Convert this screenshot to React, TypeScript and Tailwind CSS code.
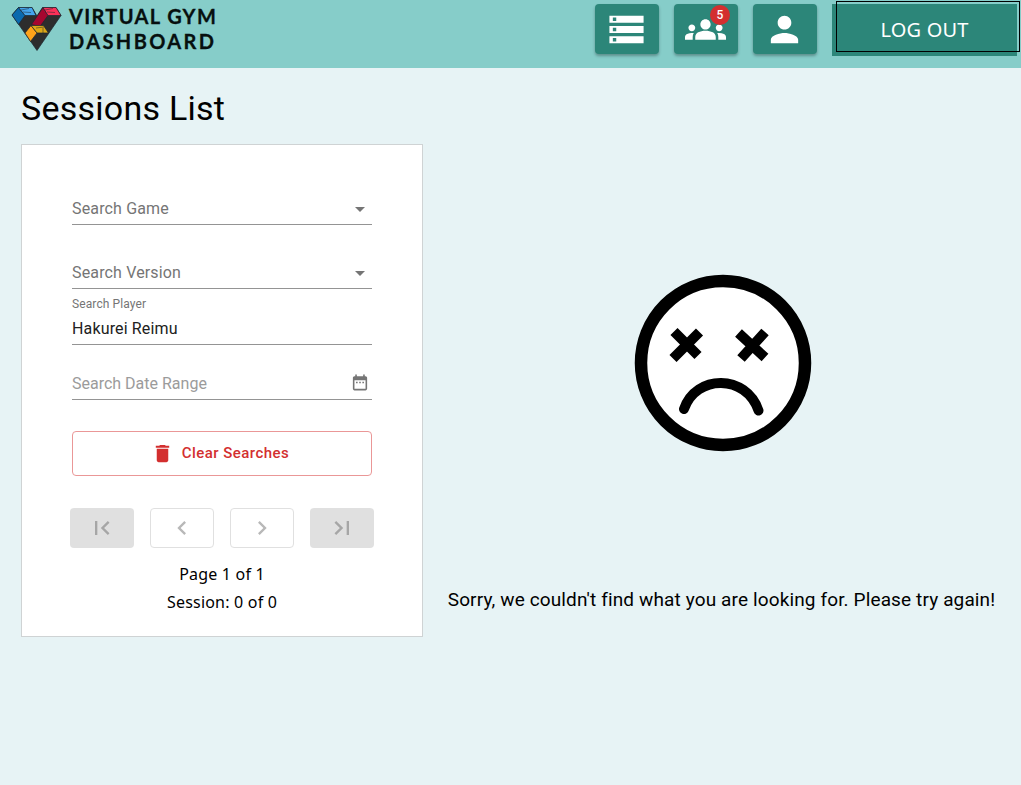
import React from 'react';

type IconProps = { d: string; className?: string };

function Icon({ d, className }: IconProps) {
  return (
    <svg viewBox="0 0 24 24" fill="currentColor" className={className} aria-hidden="true">
      <path d={d} />
    </svg>
  );
}

const icons = {
  storage: 'M2 20h20v-4H2v4zm2-3h2v2H4v-2zM2 4v4h20V4H2zm4 3H4V5h2v2zm-4 7h20v-4H2v4zm2-3h2v2H4v-2z',
  groups:
    'M12 12.75c1.63 0 3.07.39 4.24.9 1.08.48 1.76 1.56 1.76 2.73V18H6v-1.61c0-1.18.68-2.26 1.76-2.73 1.17-.52 2.61-.91 4.24-.91zM4 13c1.1 0 2-.9 2-2s-.9-2-2-2-2 .9-2 2 .9 2 2 2zm1.13 1.1c-.37-.06-.74-.1-1.13-.1-.99 0-1.93.21-2.78.58C.48 14.9 0 15.62 0 16.43V18h4.5v-1.61c0-.83.23-1.61.63-2.29zM20 13c1.1 0 2-.9 2-2s-.9-2-2-2-2 .9-2 2 .9 2 2 2zm4 3.43c0-.81-.48-1.53-1.22-1.85-.85-.37-1.79-.58-2.78-.58-.39 0-.76.04-1.13.1.4.68.63 1.46.63 2.29V18H24v-1.57zM12 6c1.66 0 3 1.34 3 3s-1.34 3-3 3-3-1.34-3-3 1.34-3 3-3z',
  person:
    'M12 12c2.21 0 4-1.79 4-4s-1.79-4-4-4-4 1.79-4 4 1.79 4 4 4zm0 2c-2.67 0-8 1.34-8 4v2h16v-2c0-2.66-5.33-4-8-4z',
  dropdown: 'M7 10l5 5 5-5z',
  calendar:
    'M9 11H7v2h2v-2zm4 0h-2v2h2v-2zm4 0h-2v2h2v-2zm2-7h-1V2h-2v2H8V2H6v2H5c-1.11 0-1.990.9-1.990 2L3 20c0 1.100.89 2 2 2h14c1.100 0 2-.9 2-2V6c0-1.100-.9-2-2-2zm0 16H5V9h14v11z',
  trash: 'M6 19c0 1.1.9 2 2 2h8c1.1 0 2-.9 2-2V7H6v12zM19 4h-3.5l-1-1h-5l-1 1H5v2h14V4z',
  first: 'M18.41 16.59L13.82 12l4.59-4.59L17 6l-6 6 6 6zM6 6h2v12H6z',
  previous: 'M15.41 7.41L14 6l-6 6 6 6 1.41-1.41L10.83 12z',
  next: 'M10 6L8.59 7.41 13.17 12l-4.58 4.59L10 18l6-6z',
  last: 'M5.59 7.41L10.18 12l-4.59 4.59L7 18l6-6-6-6zM16 6h2v12h-2z',
};

function Logo() {
  return (
    <div className="flex pl-[11px] pt-[6px]">
      <svg width="51" height="46" viewBox="0 0 51 46" aria-hidden="true">
        <g stroke="#1b2730" strokeWidth="0.7" strokeLinejoin="round">
          <path d="M1 9 7.5 1.5H21L26 10 31.500 1.500H45L50 9.500 26 44.500Z" fill="#2d2d2d" />
          <path d="M1 9 7.500 1.500 14 9.500 7.500 18.500Z" fill="#0a69ae" />
          <path d="M7.500 1.500H21L25 9.500H14Z" fill="#45a5ee" />
          <path d="M20.500 18.500 32 1.500 37 9.500 29 20.500Z" fill="#a5062f" />
          <path d="M32 1.500H45L50 9.500H37Z" fill="#fb3158" />
          <path d="M14 27 20 19.500 26 27 19.500 35.500Z" fill="#ffa31a" />
          <path d="M20 19.500H32.500L37.500 27H26Z" fill="#dda716" />
          <path d="m10 4 8-1.500M12 6l8 .5M34 4l8-1.500M36 6l8 .5M25 22l8-1M32 27V22" fill="none" strokeWidth="0.5" />
        </g>
      </svg>
      <div className="ml-[7px] -mt-[2px] font-[Lato] text-[20px] leading-[25px] font-bold text-[#07100f] [-webkit-text-stroke:0.3px_#07100f]">
        <div className="tracking-[1.35px] whitespace-nowrap">VIRTUAL GYM</div>
        <div className="tracking-[2.4px] whitespace-nowrap">DASHBOARD</div>
      </div>
    </div>
  );
}

function NavButton({ icon, badge }: { icon: string; badge?: number }) {
  return (
    <button className="relative flex h-[50px] w-16 items-center justify-center rounded bg-[#2c8679] text-white shadow-[0_2px_3px_rgba(0,0,0,0.3)]">
      <Icon d={icon} className="mr-px size-[41px]" />
      {badge !== undefined && (
        <span className="absolute top-px left-[36px] flex size-5 items-center justify-center rounded-full bg-[#d32f2f] text-[12px] font-medium">
          {badge}
        </span>
      )}
    </button>
  );
}

function SelectField({ label }: { label: string }) {
  return (
    <div className="flex h-8 items-center justify-between border-b border-[#949494] text-[#757575]">
      <span className="text-[16px] leading-[23px] tracking-[0.15px] text-[#757575]">{label}</span>
      <Icon d={icons.dropdown} className="size-6" />
    </div>
  );
}

function PageButton({ icon, filled }: { icon: string; filled?: boolean }) {
  return (
    <button
      className={
        filled
          ? 'flex h-10 w-16 items-center justify-center rounded bg-[#e0e0e0] text-[#a6a6a6]'
          : 'flex h-10 w-16 items-center justify-center rounded border border-[#e0e0e0] text-[#b8b8b8]'
      }
    >
      <Icon d={icon} className="size-7" />
    </button>
  );
}

function SadFace() {
  return (
    <svg width="178" height="178" viewBox="0 0 178 178" aria-hidden="true">
      <circle cx="89" cy="89" r="82" fill="white" stroke="black" strokeWidth="12.500" />
      <g stroke="black" strokeWidth="10" fill="none">
        <path d="M40 57.500 64 81.500M65.500 58 39 84.500" />
        <path d="M104.500 59 131 83.500M131 58 107 84.500" />
        <path d="M50 135C62 100 112 100 124.500 136.500" strokeLinecap="round" />
      </g>
    </svg>
  );
}

export default function App() {
  return (
    <div className="flex h-[785px] w-[1021px] flex-col overflow-hidden bg-[#e7f3f5] font-[Roboto,sans-serif] text-black">
      <header className="flex h-[68px] shrink-0 items-start justify-between bg-[#86cdc9]">
        <Logo />
        <div className="flex gap-[15px] pt-1 pr-1">
          <NavButton icon={icons.storage} />
          <NavButton icon={icons.groups} badge={5} />
          <NavButton icon={icons.person} />
          <button className="relative h-[52px] w-[185px] bg-[#2c8679] font-['Noto_Sans',sans-serif] text-[20px] tracking-[0.2px] text-white">
            LOG OUT
            <span className="absolute -top-[3px] left-1 h-[51px] w-[184px] border border-black" />
          </button>
        </div>
      </header>
      <div className="flex">
        <section className="w-[423px] pl-[21px]">
          <h1 className="mt-[19px] h-[42px] text-[34px] leading-[42px] tracking-[0.25px] whitespace-nowrap">Sessions List</h1>
          <div className="mt-[15px] h-[493px] border border-[#cfd3d4] bg-white px-[50px] pt-[48px]">
            <SelectField label="Search Game" />
            <div className="mt-8">
              <SelectField label="Search Version" />
            </div>
            <div className="mt-[7px] h-[49px] border-b border-[#949494]">
              <div className="text-[12px] leading-4 tracking-[0.11px] text-[#757575]">Search Player</div>
              <div className="mt-[5px] text-[16px] leading-[23px] tracking-[0.15px] text-[#212121]">Hakurei Reimu</div>
            </div>
            <div className="mt-[23px] flex h-8 items-center justify-between border-b border-[#949494]">
              <span className="text-[16px] leading-[23px] text-[#9b9b9b]">Search Date Range</span>
              <Icon d={icons.calendar} className="mr-0.5 mb-[3px] h-[19px] w-5 text-[#757575]" />
            </div>
            <button className="mt-[31px] flex h-[45px] w-[300px] items-center justify-center gap-[8px] rounded border border-[#ea9797] pr-1 text-[15px] font-medium tracking-[0.46px] text-[#d32f2f]">
              <Icon d={icons.trash} className="size-[23px]" />
              Clear Searches
            </button>
            <div className="-mx-[2px] mt-8 flex justify-between">
              <PageButton icon={icons.first} filled />
              <PageButton icon={icons.previous} />
              <PageButton icon={icons.next} />
              <PageButton icon={icons.last} filled />
            </div>
            <div className="mt-[12px] text-center font-['Noto_Sans',sans-serif] text-[16px] leading-7 tracking-[0.2px]">
              <div>Page 1 of 1</div>
              <div>Session: 0 of 0</div>
            </div>
          </div>
        </section>
        <section className="flex w-[597px] flex-col items-center pt-[206px]">
          <div className="pl-[2px]">
            <SadFace />
          </div>
          <p className="mt-[134px] text-[19px] leading-7 tracking-[0.13px] whitespace-nowrap">
            Sorry, we couldn't find what you are looking for. Please try again!
          </p>
        </section>
      </div>
    </div>
  );
}
